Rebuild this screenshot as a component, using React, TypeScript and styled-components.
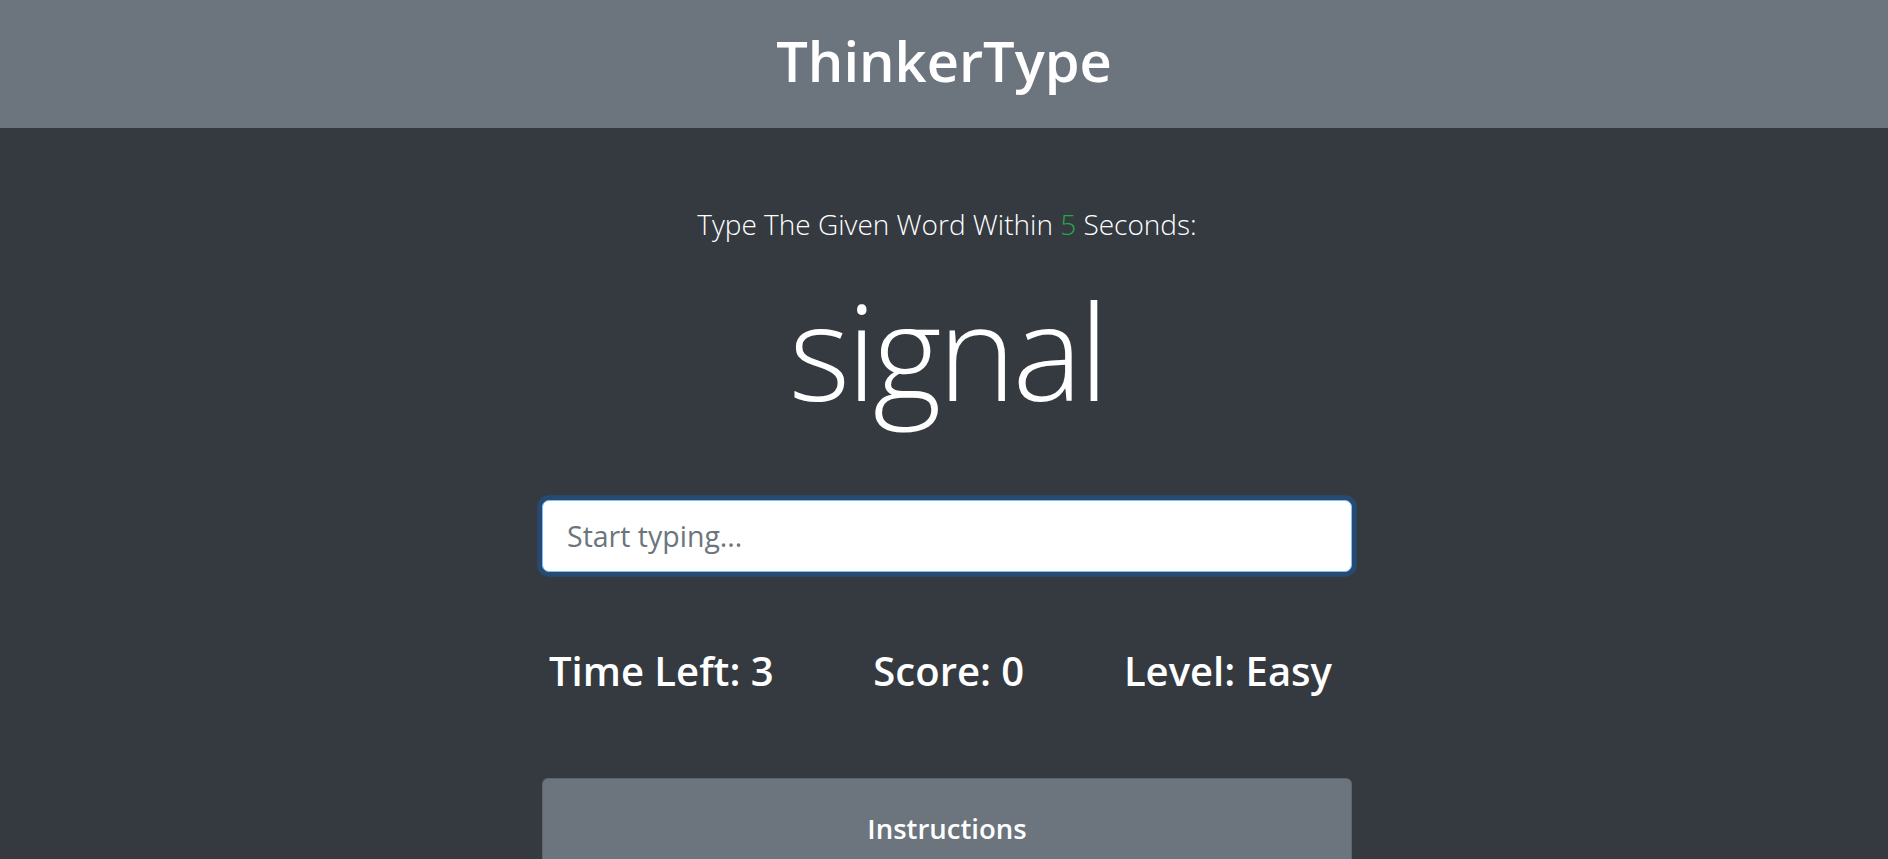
import React from "react";
import styled, { createGlobalStyle } from "styled-components";

const GlobalStyle = createGlobalStyle`
  html, body {
    margin: 0;
    padding: 0;
    background: #343a40;
  }
  body {
    font-family: "Open Sans", "Noto Sans", "Liberation Sans", sans-serif;
    color: #fff;
  }
  * { box-sizing: border-box; }
`;

const Page = styled.div`
  height: 100vh;
  overflow: hidden;
  background: #343a40;
`;

const Header = styled.header`
  height: 128px;
  background: #6c757d;
  padding-bottom: 8px;
  text-align: center;
`;

const Title = styled.h1`
  margin: 0;
  font-size: 56px;
  font-weight: 600;
  line-height: 120px;
  color: #fff;
`;

const Main = styled.main`
  width: 810px;
  margin-left: calc(50% - 402px);
  text-align: center;
  padding-top: 74px;
`;

const Lead = styled.p`
  margin: 0;
  font-size: 28px;
  font-weight: 300;
  line-height: 45px;
`;

const Seconds = styled.span`
  color: #28a745;
`;

const Word = styled.h2`
  margin: 17.4px 0 0;
  font-size: 132px;
  font-weight: 300;
  letter-spacing: -3.5px;
  line-height: 172.8px;
`;

const WordInput = styled.input`
  display: block;
  width: 100%;
  height: 72px;
  margin-top: 63px;
  padding: 12px 24px;
  font-family: inherit;
  font-size: 28.5px;
  color: #495057;
  background: #fff;
  border: 1.5px solid #80bdff;
  border-radius: 7px;
  box-shadow: 0 0 0 4.8px rgba(0, 123, 255, 0.25);
  outline: none;
  &::placeholder {
    color: #6c757d;
  }
`;

const Stats = styled.div`
  display: flex;
  justify-content: space-between;
  padding: 0 20px 0 7px;
  margin-top: 73.1px;
`;

const Stat = styled.h3`
  margin: 0;
  font-size: 40px;
  font-weight: 600;
  line-height: 52.8px;
`;

const Card = styled.section`
  margin-top: 80.1px;
  background: #6c757d;
  border: 1px solid rgba(0, 0, 0, 0.125);
  border-radius: 6px;
  padding: 32px 30px 30px;
`;

const CardTitle = styled.h5`
  margin: 0;
  font-size: 27.5px;
  font-weight: 600;
  line-height: 36px;
`;

export default function App() {
  return (
    <Page>
      <GlobalStyle />
      <Header>
        <Title>ThinkerType</Title>
      </Header>
      <Main>
        <Lead>
          Type The Given Word Within <Seconds>5</Seconds> Seconds:
        </Lead>
        <Word>signal</Word>
        <WordInput placeholder="Start typing..." autoFocus />
        <Stats>
          <Stat>Time Left: 3</Stat>
          <Stat>Score: 0</Stat>
          <Stat>Level: Easy</Stat>
        </Stats>
        <Card>
          <CardTitle>Instructions</CardTitle>
        </Card>
      </Main>
    </Page>
  );
}
